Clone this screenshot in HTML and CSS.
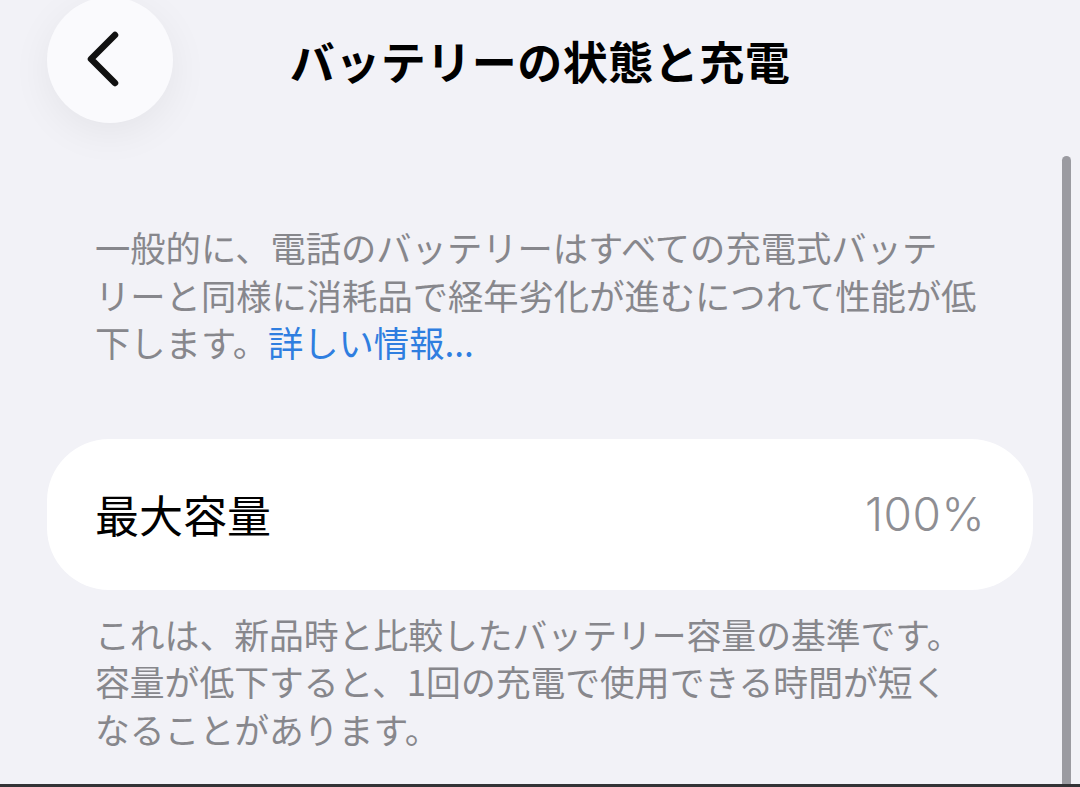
FILE: index.html
```html
<!DOCTYPE html>
<html lang="ja">
<head>
<meta charset="utf-8">
<link rel="stylesheet" href="styles.css">
</head>
<body>
<div class="screen">
  <header class="nav">
    <div class="nav-left">
      <button class="back" aria-label="戻る">
        <svg width="40" height="60" viewBox="0 0 40 60"><path d="M29 5 L5 29 L29 53" fill="none" stroke="#111" stroke-width="6.5" stroke-linecap="round" stroke-linejoin="round"/></svg>
      </button>
    </div>
    <h1 class="title">バッテリーの状態と充電</h1>
    <div class="nav-right"></div>
  </header>

  <p class="note intro">一般的に、電話のバッテリーはすべての充電式バッテ<br>リーと同様に消耗品で経年劣化が進むにつれて性能が低<br>下します。<a class="link">詳しい情報...</a></p>

  <div class="card">
    <span class="label">最大容量</span>
    <span class="value">100%</span>
  </div>

  <p class="note footer">これは、新品時と比較したバッテリー容量の基準です。<br>容量が低下すると、1回の充電で使用できる時間が短く<br>なることがあります。</p>

  <div class="scrollbar"></div>
</div>
</body>
</html>
```

FILE: styles.css
```css
html, body {
  margin: 0;
  padding: 0;
}
body {
  background: #f2f2f7;
  font-family: "Noto Sans CJK JP", "Noto Sans", sans-serif;
  width: 1080px;
  height: 787px;
  overflow: hidden;
}
.screen {
  position: relative;
  width: 1080px;
  height: 787px;
  box-sizing: border-box;
  border-bottom: 3px solid #333336;
  overflow: hidden;
}
.nav {
  display: grid;
  grid-template-columns: 1fr auto 1fr;
  align-items: center;
  margin-top: -3px;
  height: 126px;
}
.nav-left {
  padding-left: 47px;
}
.back {
  width: 126px;
  height: 126px;
  border-radius: 50%;
  border: none;
  background: #fafafd;
  box-shadow: 0 10px 40px rgba(0, 0, 0, 0.06);
  display: flex;
  align-items: center;
  justify-content: center;
  padding: 0 8px 0 0;
}
.title {
  margin: 0;
  font-size: 45px;
  font-weight: 700;
  color: #000;
  letter-spacing: 0.5px;
  line-height: 1;
}
.note {
  margin: 0;
  padding-left: 95px;
  font-size: 35.3px;
  line-height: 47.5px;
  color: #87878c;
  white-space: nowrap;
}
.intro {
  margin-top: 100px;
}
.link {
  color: #2f7ee0;
}
.card {
  margin: 73px 47px 0 47px;
  height: 151px;
  width: 986px;
  box-sizing: border-box;
  background: #fff;
  border-radius: 62px;
  display: flex;
  align-items: center;
  justify-content: space-between;
  padding: 0 48px 0 48px;
}
.label {
  font-size: 44px;
  color: #000;
}
.value {
  font-family: "Inter", "Noto Sans", sans-serif;
  font-weight: 300;
  font-size: 46px;
  letter-spacing: 0.5px;
  color: #8e8e93;
}
.footer {
  margin-top: 21px;
  font-size: 34.8px;
}
.scrollbar {
  position: absolute;
  left: 1062px;
  top: 156px;
  width: 9px;
  bottom: 0;
  background: #9b9ba1;
  border-radius: 5px 5px 0 0;
}
```
